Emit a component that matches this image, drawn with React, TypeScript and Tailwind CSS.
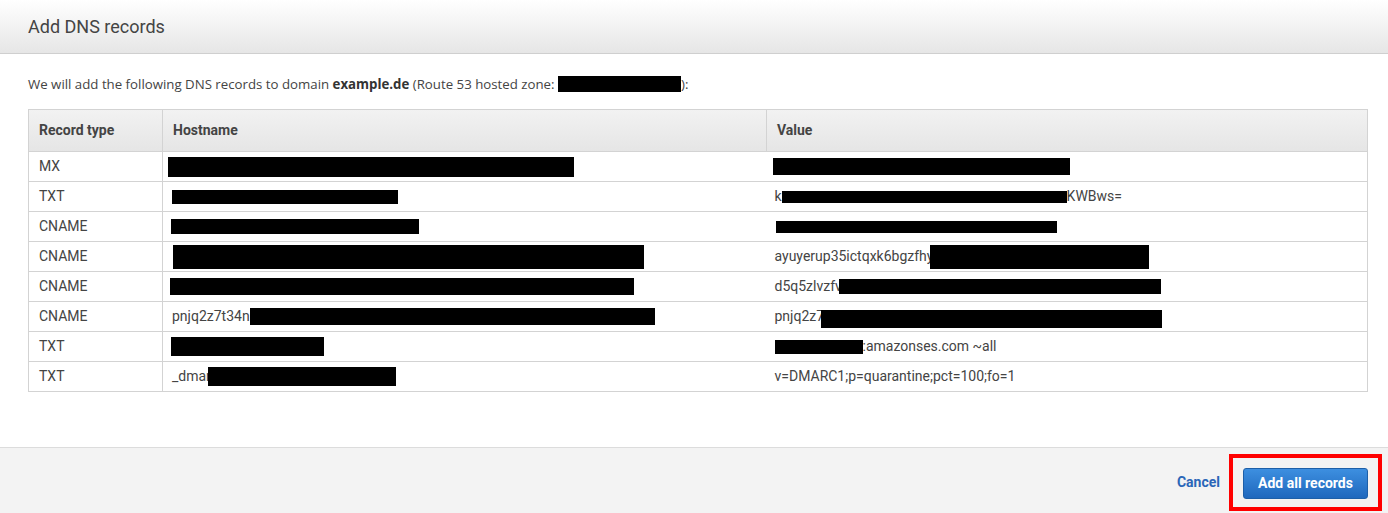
import React from "react";

type Part = string | { w: number; h: number; dx?: number; dy?: number };

type Row = { type: string; host: Part[]; value: Part[] };

// black redaction blocks, width/height in px, optional horizontal/vertical nudge
const rows: Row[] = [
  { type: "MX", host: [{ w: 406, h: 20, dx: -4, dy: 0 }], value: [{ w: 297, h: 17, dx: -2 }] },
  { type: "TXT", host: [{ w: 226, h: 14 }], value: ["k", { w: 285, h: 12 }, "KWBws="] },
  { type: "CNAME", host: [{ w: 248, h: 15, dx: -1 }], value: [{ w: 281, h: 12, dx: 1 }] },
  { type: "CNAME", host: [{ w: 471, h: 24, dx: 1 }], value: ["ayuyerup35ictqxk6bgzfhy", { w: 219, h: 24, dx: -3 }] },
  { type: "CNAME", host: [{ w: 464, h: 17, dx: -2 }], value: ["d5q5zlvzfv", { w: 322, h: 15, dx: -3 }] },
  { type: "CNAME", host: ["pnjq2z7t34n", { w: 405, h: 17 }], value: ["pnjq2z7", { w: 341, h: 18, dy: 2, dx: -3 }] },
  { type: "TXT", host: [{ w: 153, h: 19, dx: -1 }], value: [{ w: 88, h: 14 }, ":amazonses.com ~all"] },
  { type: "TXT", host: ["_dmar", { w: 188, h: 19, dx: -3 }], value: ["v=DMARC1;p=quarantine;pct=100;fo=1"] },
];

function Cell({ parts }: { parts: Part[] }) {
  return (
    <div className="flex items-center whitespace-nowrap">
      {parts.map((p, i) =>
        typeof p === "string" ? (
          <span key={i}>{p}</span>
        ) : (
          <span
            key={i}
            className="inline-block bg-black"
            style={{ width: p.w, height: p.h, marginLeft: p.dx ?? 0, marginTop: (p.dy ?? 0) * 2 }}
          />
        )
      )}
    </div>
  );
}

export default function App() {
  return (
    <div className="flex h-[513px] w-[1388px] flex-col bg-white font-['Roboto',sans-serif] text-[#444]">
      <div className="flex h-[54px] shrink-0 items-center border-b border-[#cfcfcf] bg-gradient-to-b from-[#ffffff] to-[#e6e6e6] pl-[28px]">
        <h2 className="text-[18px] text-[#444]">Add DNS records</h2>
      </div>

      <div className="flex-1 px-[28px] pt-[20px]">
        <p className="font-['Open_Sans',sans-serif] text-[13.25px] leading-[20px]">
          We will add the following DNS records to domain <b className="text-[#333]">example.de</b> (Route 53 hosted
          zone: <span className="inline-block h-[16px] w-[123px] bg-black align-[-3px]" />):
        </p>

        <table className="mt-[15px] w-[1340px] border-collapse text-[14px]">
          <thead>
            <tr className="h-[42px] bg-gradient-to-b from-[#f2f2f2] to-[#e5e5e5] text-left">
              <th className="w-[134px] border border-[#d3d3d3] pl-[10px] font-bold text-[#444]">Record type</th>
              <th className="w-[604px] border border-[#d3d3d3] pl-[10px] font-bold text-[#444]">Hostname</th>
              <th className="border border-[#d3d3d3] pl-[10px] font-bold text-[#444]">Value</th>
            </tr>
          </thead>
          <tbody>
            {rows.map((r, i) => (
              <tr key={i} className="h-[30px]">
                <td className="border border-[#d3d3d3] pl-[10px] align-middle">{r.type}</td>
                <td className="border-y border-[#d3d3d3] pl-[9px] align-middle">
                  <Cell parts={r.host} />
                </td>
                <td className="border border-l-0 border-[#d3d3d3] pl-[8px] align-middle">
                  <Cell parts={r.value} />
                </td>
              </tr>
            ))}
          </tbody>
        </table>
      </div>

      <div className="flex h-[66px] shrink-0 items-center justify-end border-t border-[#dcdcdc] bg-[#f3f3f3] pt-[3px] pr-[6px]">
        <a className="mr-[9px] cursor-pointer text-[14px] font-bold text-[#2a66b8]">Cancel</a>
        <div className="border-4 border-[#ff0000] pt-[10px] pr-[10px] pb-[8px] pl-[10px]">
          <button className="h-[31px] w-[125px] rounded-[3px] border border-[#1d5fa8] bg-gradient-to-b from-[#3d8fe0] to-[#1f68bd] text-[14px] font-bold text-white">
            Add all records
          </button>
        </div>
      </div>
    </div>
  );
}
